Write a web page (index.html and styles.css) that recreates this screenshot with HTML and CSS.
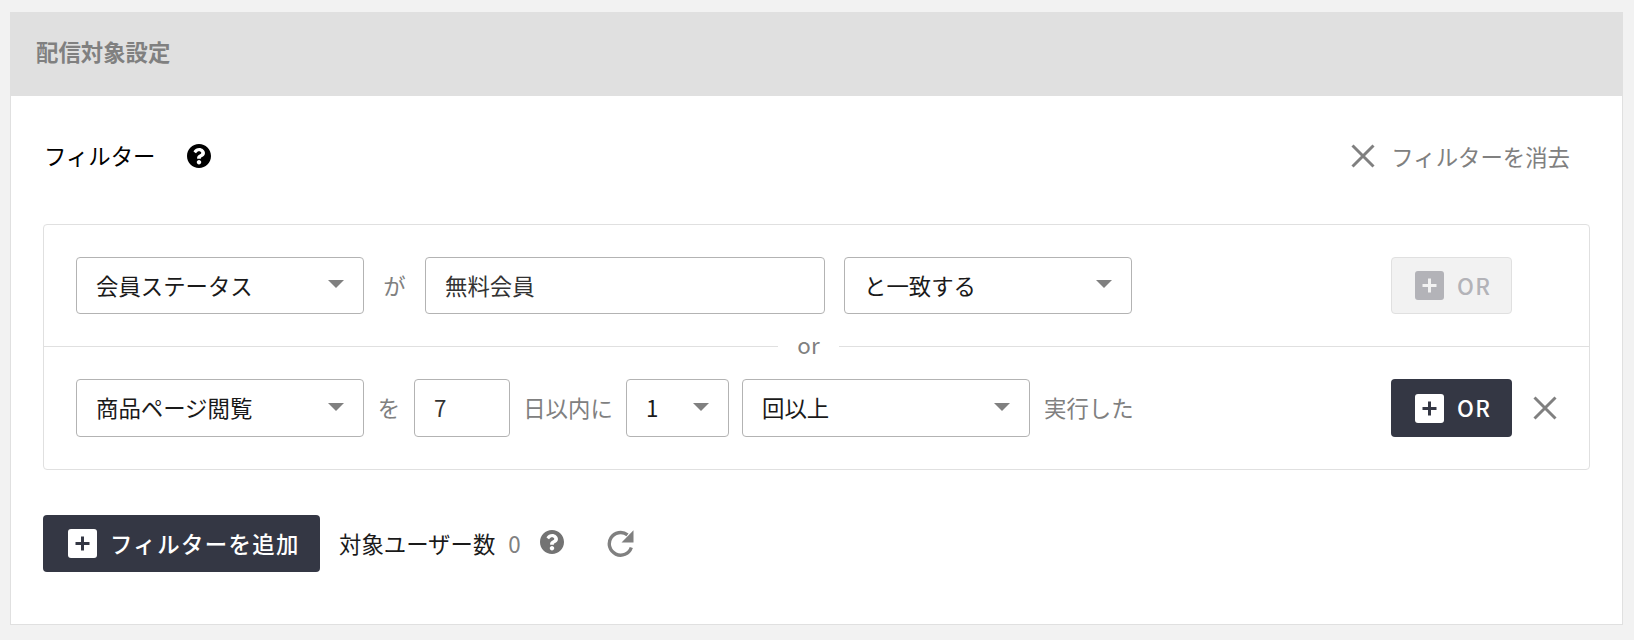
FILE: index.html
```html
<!DOCTYPE html>
<html lang="ja">

<head>
    <meta charset="UTF-8">
    <meta name="viewport" content="width=device-width, initial-scale=1.0">
    <title>配信対象設定</title>
    <link rel="stylesheet" href="styles.css">
</head>

<body>
    <svg class="sprite" xmlns="http://www.w3.org/2000/svg">
        <symbol id="icon-help" viewBox="8 8 496 496">
            <path d="M504 256c0 136.997-111.043 248-248 248S8 392.997 8 256C8 119.083 119.043 8 256 8s248 111.083 248 248zM262.655 90c-54.497 0-89.255 22.957-116.549 63.758-3.536 5.286-2.353 12.415 2.715 16.258l34.699 26.31c5.205 3.947 12.621 3.008 16.665-2.122 17.864-22.658 30.113-35.797 57.303-35.797 20.429 0 45.698 13.148 45.698 32.958 0 14.976-12.363 22.667-32.534 33.976C247.128 238.528 216 254.941 216 296v4c0 6.627 5.373 12 12 12h56c6.627 0 12-5.373 12-12v-1.333c0-28.462 83.186-29.647 83.186-106.667 0-58.002-60.165-102-116.531-102zM256 338c-25.365 0-46 20.635-46 46 0 25.364 20.635 46 46 46s46-20.636 46-46c0-25.365-20.635-46-46-46z"/>
        </symbol>
        <symbol id="icon-close" viewBox="0 0 24 24">
            <path d="M1.500 1.500 22.500 22.500M22.500 1.500 1.500 22.500" fill="none" stroke="currentColor" stroke-width="3"/>
        </symbol>
        <symbol id="icon-plus" viewBox="0 0 29 29">
            <path d="M14.500 7.500v14M7.500 14.500h14" fill="none" stroke="currentColor" stroke-width="3"/>
        </symbol>
    </svg>

    <section class="card">
        <h1 class="card-title">配信対象設定</h1>

        <div class="card-body">
            <div class="filter-head">
                <span class="filter-label">フィルター</span>
                <svg class="icon-help"><use href="#icon-help"/></svg>
                <a class="clear-link">
                    <svg class="icon-clear"><use href="#icon-close"/></svg>
                    <span>フィルターを消去</span>
                </a>
            </div>

            <div class="filter-box">
                <div class="filter-row row-first">
                    <div class="select w-288"><span class="txt">会員ステータス</span><i class="caret"></i></div>
                    <span class="joint txt gap-a">が</span>
                    <input class="field w-400" type="text" value="無料会員">
                    <div class="select w-288 gap-b"><span class="txt">と一致する</span><i class="caret"></i></div>
                    <button class="or-btn" disabled>
                        <span class="plus-box"><svg><use href="#icon-plus"/></svg></span><span class="txt">OR</span>
                    </button>
                    <span class="remove-slot"></span>
                </div>

                <div class="or-divider">
                    <span class="line line-left"></span>
                    <span class="or-text">or</span>
                    <span class="line line-right"></span>
                </div>

                <div class="filter-row">
                    <div class="select w-288"><span class="txt">商品ページ閲覧</span><i class="caret"></i></div>
                    <span class="joint txt gap-c">を</span>
                    <input class="field w-96" type="text" value="7">
                    <span class="joint txt gap-d">日以内に</span>
                    <div class="select w-103"><span class="txt">1</span><i class="caret"></i></div>
                    <div class="select w-288 gap-e"><span class="txt">回以上</span><i class="caret"></i></div>
                    <span class="joint txt gap-f">実行した</span>
                    <button class="or-btn">
                        <span class="plus-box"><svg><use href="#icon-plus"/></svg></span><span class="txt">OR</span>
                    </button>
                    <span class="remove-slot">
                        <svg class="icon-remove"><use href="#icon-close"/></svg>
                    </span>
                </div>
            </div>

            <div class="filter-foot">
                <button class="add-btn">
                    <span class="plus-box"><svg><use href="#icon-plus"/></svg></span><span class="txt">フィルターを追加</span>
                </button>
                <span class="count-label txt">対象ユーザー数</span>
                <span class="count-value txt">0</span>
                <svg class="icon-help-gray"><use href="#icon-help"/></svg>
                <svg class="icon-refresh" viewBox="0 0 27 27">
                    <path d="M24.300 17.500A11.300 11.300 0 1 1 20.500 4.900" fill="none" stroke="currentColor" stroke-width="3.400"/>
                    <path d="M26.500 0.300V12.500H14.500z"/>
                </svg>
            </div>
        </div>
    </section>
</body>

</html>
```

FILE: styles.css
```css
* {
    box-sizing: border-box;
}

body {
    margin: 0;
    padding: 12px 11px 16px 10px;
    background-color: #f2f2f2;
    font-family: "Noto Sans CJK JP", "Noto Sans", sans-serif;
    font-size: 22.4px;
    color: #1a1a1a;
}

.sprite {
    display: none;
}

.card {
    height: 613px;
    background-color: white;
    border: 1px solid #e0e0e0;
    border-top: none;
}

.card-title {
    height: 84px;
    margin: 0;
    padding-left: 25px;
    background-color: #e0e0e0;
    font-size: 22.4px;
    font-weight: 700;
    line-height: 78px;
    color: #808080;
}

.card-body {
    padding: 0 32px;
}

.txt {
    padding-bottom: 2px;
}

.filter-head {
    display: flex;
    align-items: center;
    height: 128px;
    padding: 0 20px 8px 1px;
}

.filter-label {
    width: 143px;
    padding-bottom: 2px;
    color: #000;
}

.icon-help {
    width: 24px;
    height: 24px;
}

.clear-link {
    display: flex;
    align-items: center;
    margin-left: auto;
    color: #808080;
}

.icon-clear {
    width: 24px;
    height: 24px;
    margin-right: 16px;
}

.filter-box {
    padding: 32px;
    border: 1px solid #e0e0e0;
    border-radius: 4px;
}

.filter-row {
    display: flex;
    align-items: center;
    height: 58px;
}

.row-first {
    height: 57px;
}

.select,
.field {
    height: 100%;
    border: 1px solid #b3b3b3;
    border-radius: 4px;
    background-color: white;
    font-family: inherit;
    font-size: 22.4px;
}

.select {
    display: flex;
    align-items: center;
    justify-content: space-between;
    padding: 0 19px;
}

.field {
    padding: 0 19px 2px;
    color: #333;
    outline: none;
}

.caret {
    width: 0;
    height: 0;
    margin-bottom: 3px;
    border-top: 8px solid #808080;
    border-left: 8px solid transparent;
    border-right: 8px solid transparent;
}

.w-288 {
    width: 288px;
}

.w-400 {
    width: 400px;
}

.w-96 {
    width: 96px;
}

.w-103 {
    width: 103px;
}

.joint {
    color: #808080;
    white-space: nowrap;
}

.gap-a {
    width: 61px;
    text-align: center;
}

.gap-b {
    margin-left: 19px;
}

.gap-c {
    width: 50px;
    text-align: center;
}

.gap-d {
    width: 116px;
    text-align: center;
}

.gap-e {
    margin-left: 13px;
}

.gap-f {
    margin-left: 14px;
}

.or-btn,
.add-btn {
    display: flex;
    align-items: center;
    border: none;
    border-radius: 4px;
    background-color: #343744;
    color: white;
    font-family: inherit;
    font-size: 22.4px;
    font-weight: 500;
    letter-spacing: 1.400px;
}

.or-btn {
    width: 121px;
    height: 100%;
    margin-left: auto;
    padding: 0 0 0 24px;
}

.or-btn:disabled {
    border: 1px solid #e0e0e0;
    padding-left: 23px;
    background-color: #f2f2f2;
    color: #b3b3b8;
}

.or-btn:disabled .plus-box {
    background-color: #b3b3b8;
    color: #f2f2f2;
}

.plus-box {
    display: block;
    width: 29px;
    height: 29px;
    margin-right: 13px;
    border-radius: 3px;
    background-color: white;
    color: #343744;
}

.plus-box svg {
    display: block;
    width: 29px;
    height: 29px;
}

.remove-slot {
    display: flex;
    justify-content: flex-end;
    width: 45px;
    color: #808080;
}

.icon-remove {
    width: 24px;
    height: 24px;
}

.or-divider {
    display: flex;
    align-items: center;
    height: 1px;
    margin: 32px -32px 32px;
}

.line {
    height: 1px;
    background-color: #e0e0e0;
}

.line-left {
    width: 734px;
}

.line-right {
    flex: 1;
}

.or-text {
    width: 61px;
    padding-bottom: 6px;
    text-align: center;
    color: #808080;
}

.filter-foot {
    display: flex;
    align-items: center;
    margin-top: 45px;
}

.add-btn {
    width: 277px;
    height: 57px;
    padding: 0 0 0 25px;
}

.count-label {
    margin-left: 19px;
    color: #1a1a1a;
}

.count-value {
    margin-left: 13px;
    color: #808080;
}

.icon-help-gray {
    width: 24px;
    height: 24px;
    margin-left: 19px;
    margin-bottom: 3px;
    fill: #737373;
}

.icon-refresh {
    width: 27px;
    height: 27px;
    margin-left: 43px;
    margin-bottom: 1px;
    color: #808080;
    fill: #808080;
}
```
